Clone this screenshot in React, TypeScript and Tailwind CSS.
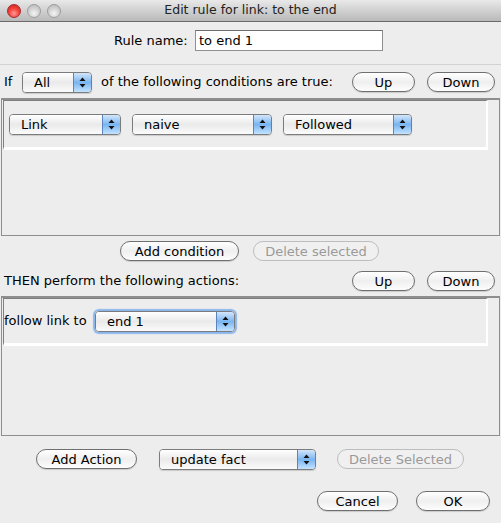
import React from "react";

type ComboProps = {
  label: string;
  width: number;
  focused?: boolean;
};

function Arrows() {
  return (
    <svg width="7" height="11" viewBox="0 0 7 11">
      <path d="M3.5 0.5 L6.5 4 L0.5 4 Z" fill="#111" />
      <path d="M3.5 10.5 L6.5 7 L0.5 7 Z" fill="#111" />
    </svg>
  );
}

function Combo({ label, width, focused }: ComboProps) {
  return (
    <div
      style={{ width }}
      className={
        "flex h-[21px] shrink-0 overflow-hidden rounded-[4px] border border-[#7c7c7c] " +
        (focused ? "shadow-[0_0_1px_2px_#8ab6ec]" : "shadow-[0_1px_1px_rgba(0,0,0,0.15)]")
      }
    >
      <div className="flex flex-1 items-center bg-gradient-to-b from-white via-[#eaeaea] to-[#fbfbfb] pl-[11px] leading-none">
        {label}
      </div>
      <div className="flex w-[18px] items-center justify-center border-l border-[#5b83bd] bg-gradient-to-b from-[#d3e6fa] via-[#79b5f0] to-[#c3e3ff]">
        <Arrows />
      </div>
    </div>
  );
}

type BtnProps = {
  label: string;
  width: number;
  disabled?: boolean;
};

function AquaButton({ label, width, disabled }: BtnProps) {
  return (
    <div
      style={{ width }}
      className={
        "flex h-[20px] shrink-0 items-center justify-center rounded-full border leading-none " +
        (disabled
          ? "border-[#bdbdbd] bg-[#f0f0f0] text-[#9a9a9a]"
          : "border-[#6f6f6f] bg-gradient-to-b from-white via-[#efefef] to-[#fdfdfd] text-black shadow-[0_1px_1px_rgba(0,0,0,0.15)]")
      }
    >
      {label}
    </div>
  );
}

function Light({ red }: { red?: boolean }) {
  return (
    <div
      className={
        "h-[14px] w-[14px] rounded-full border " +
        (red
          ? "border-[#a8282a] bg-[radial-gradient(circle_at_50%_70%,#ff9a98_0%,#f4473f_45%,#c4201d_100%)]"
          : "border-[#9c9c9c] bg-[radial-gradient(circle_at_50%_70%,#f4f4f4_0%,#d2d2d2_50%,#b4b4b4_100%)]")
      }
    />
  );
}

export default function App() {
  return (
    <div className="h-[523px] w-[501px] overflow-hidden bg-[#ededed] font-['DejaVu_Sans',sans-serif] text-[13px] text-black">
      {/* title bar */}
      <div className="relative flex h-[22px] items-center border-b border-[#6a6a6a] bg-gradient-to-b from-[#e9e9e9] to-[#b9b9b9]">
        <div className="flex gap-[6px] pl-[7px]">
          <Light red />
          <Light />
          <Light />
        </div>
        <div className="absolute inset-0 flex items-center justify-center text-[12.5px] text-[#222]">
          Edit rule for link: to the end
        </div>
      </div>

      {/* rule name */}
      <div className="mt-[8px] flex h-[21px] items-center">
        <div className="ml-[114px] w-[81px]">Rule name:</div>
        <div className="flex h-[21px] w-[188px] items-center border border-[#8f8f8f] border-t-[#6d6d6d] bg-white pl-[3px]">
          to end 1
        </div>
      </div>

      <div className="mt-[13px] h-[1px] bg-[#d2d2d2]" />

      {/* IF row */}
      <div className="mt-[7px] flex h-[20px] items-center">
        <div className="ml-[4px] w-[18px]">If</div>
        <Combo label="All" width={70} />
        <div className="ml-[9px] w-[251px]">of the following conditions are true:</div>
        <AquaButton label="Up" width={63} />
        <div className="ml-[12px]">
          <AquaButton label="Down" width={68} />
        </div>
      </div>

      {/* conditions panel */}
      <div className="ml-[1px] mt-[6px] h-[138px] w-[499px] border border-t-2 border-[#8e8e8e] pl-[1px]">
        <div className="flex h-[50px] w-[485px] items-center gap-[11px] border-l border-t border-[#808080] border-b-[3px] border-r-2 border-b-white border-r-white pl-[5px]">
          <Combo label="Link" width={112} />
          <Combo label="naive" width={140} />
          <Combo label="Followed" width={129} />
        </div>
      </div>

      {/* condition buttons */}
      <div className="mt-[5px] flex h-[20px] items-center">
        <div className="ml-[120px]">
          <AquaButton label="Add condition" width={119} />
        </div>
        <div className="ml-[14px]">
          <AquaButton label="Delete selected" width={126} disabled />
        </div>
      </div>

      {/* THEN row */}
      <div className="mt-[10px] flex h-[20px] items-center">
        <div className="ml-[4px] w-[348px]">THEN perform the following actions:</div>
        <AquaButton label="Up" width={63} />
        <div className="ml-[12px]">
          <AquaButton label="Down" width={68} />
        </div>
      </div>

      {/* actions panel */}
      <div className="ml-[1px] mt-[5px] h-[140px] w-[499px] border border-t-2 border-[#8e8e8e] pl-[1px]">
        <div className="flex h-[48px] w-[485px] items-center border-l border-t border-[#808080] border-b-[3px] border-r-2 border-b-white border-r-white">
          <div className="w-[91px]">follow link to</div>
          <Combo label="end 1" width={140} focused />
        </div>
      </div>

      {/* action buttons */}
      <div className="mt-[13px] flex h-[20px] items-center">
        <div className="ml-[36px]">
          <AquaButton label="Add Action" width={101} />
        </div>
        <div className="ml-[22px]">
          <Combo label="update fact" width={157} />
        </div>
        <div className="ml-[21px]">
          <AquaButton label="Delete Selected" width={127} disabled />
        </div>
      </div>

      {/* dialog buttons */}
      <div className="mt-[22px] flex h-[20px] items-center">
        <div className="ml-[317px]">
          <AquaButton label="Cancel" width={81} />
        </div>
        <div className="ml-[18px]">
          <AquaButton label="OK" width={74} />
        </div>
      </div>
    </div>
  );
}
